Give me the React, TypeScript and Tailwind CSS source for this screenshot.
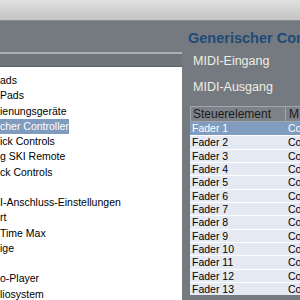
const leftItems = [
    { label: "ads" },
    { label: "Pads" },
    { label: "ienungsgeräte" },
    { label: "cher Controller", selected: true },
    { label: "ick Controls" },
    { label: "g SKI Remote" },
    { label: "ck Controls" },
    { label: "" },
    { label: "I-Anschluss-Einstellungen" },
    { label: "rt" },
    { label: "Time Max" },
    { label: "ige" },
    { label: "" },
    { label: "o-Player" },
    { label: "liosystem" },
]

const faders = Array.from({ length: 13 }, (_, i) => `Fader ${i + 1}`)

export default function App() {
    return (
        <div className="flex h-[300px] w-[300px] flex-col overflow-hidden font-['Liberation_Sans',Arial,sans-serif]">
            <div className="h-[21px] shrink-0 border-b border-[#8a8d90] bg-gradient-to-b from-[#e0e0e0] to-[#c3c3c3]" />
            <div className="flex flex-1 bg-[#757a80]">
                <aside className="flex w-[182px] shrink-0 flex-col">
                    <div className="h-[31px]" />
                    <div className="h-[2px] bg-[#aab1b9]" />
                    <div className="h-[13px] border-b border-[#5e6267] bg-[#6f7479]" />
                    <ul className="flex-1 bg-white pt-[6px] text-[10.5px] text-black">
                        {leftItems.map((item, i) => (
                            <li
                                key={i}
                                className={
                                    item.selected
                                        ? "h-[15.25px] w-[69px] whitespace-nowrap bg-[#7f9bbd] leading-[15.25px] text-white"
                                        : "h-[15.25px] whitespace-nowrap leading-[15.25px]"
                                }>
                                {item.label}
                            </li>
                        ))}
                    </ul>
                </aside>
                <section className="min-w-0 flex-1 overflow-hidden pl-[8px]">
                    <h2 className="-ml-[2px] mt-[9px] whitespace-nowrap text-[14.5px] font-bold leading-[16px] text-[#1d4a78]">
                        Generischer Controller
                    </h2>
                    <p className="mt-[8px] whitespace-nowrap pl-[3px] text-[12.5px] leading-[14px] text-[#efeee2]">MIDI-Eingang</p>
                    <p className="mt-[12px] whitespace-nowrap pl-[3px] text-[12.5px] leading-[14px] text-[#efeee2]">MIDI-Ausgang</p>
                    <div className="mt-[12px] w-[200px] text-[10.5px]">
                        <div className="flex h-[16px] border border-[#a2a7ad] bg-[#7d8288] text-[12px] leading-[14px] text-[#1a1a1a]">
                            <div className="w-[95px] border-r border-[#a2a7ad] pl-[2px]">Steuerelement</div>
                            <div className="flex-1 pl-[3px]">MIDI-Status</div>
                        </div>
                        {faders.map((name, i) => (
                            <div
                                key={name}
                                className={
                                    i === 0
                                        ? "flex h-[13.333px] bg-[#809cbe] leading-[13px] text-white"
                                        : "flex h-[13.333px] border-t border-white bg-[#e5e9f2] leading-[12px] text-black"
                                }>
                                <div className="w-[95px] pl-[2px]">{name}</div>
                                <div className="flex-1 pl-[3px]">Controller</div>
                            </div>
                        ))}
                    </div>
                </section>
            </div>
        </div>
    )
}
